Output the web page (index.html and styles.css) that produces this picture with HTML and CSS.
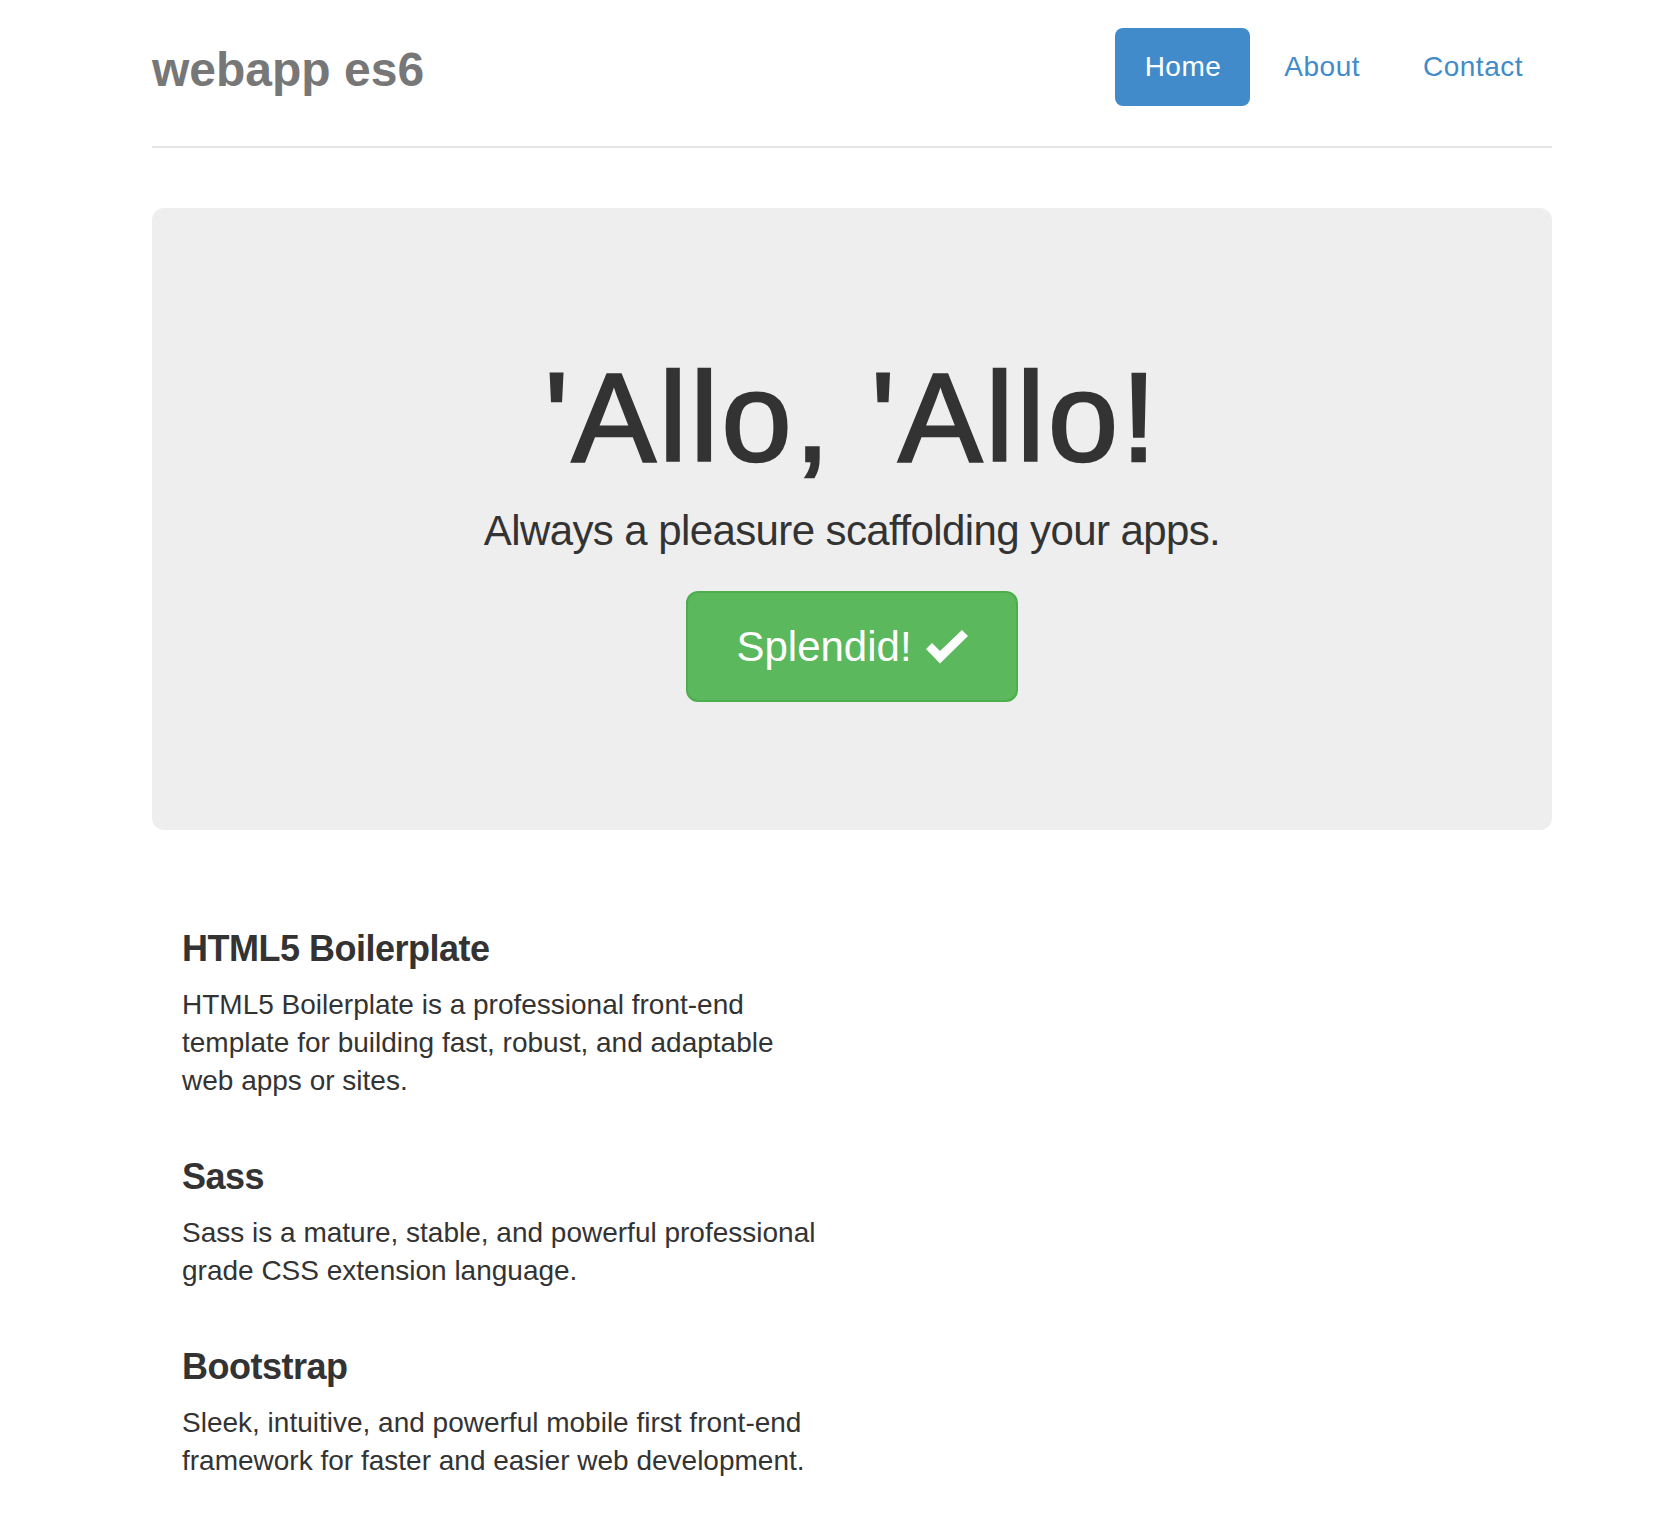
FILE: index.html
```html
<!DOCTYPE html>
<html lang="en">
<head>
<meta charset="utf-8">
<title>webapp es6</title>
<link rel="stylesheet" href="styles.css">
</head>
<body>
<div class="container">
  <header class="header">
    <h3 class="brand">webapp es6</h3>
    <nav>
      <ul class="nav-pills">
        <li class="active"><a href="#">Home</a></li>
        <li><a href="#">About</a></li>
        <li><a href="#">Contact</a></li>
      </ul>
    </nav>
  </header>

  <section class="jumbotron">
    <h1 class="hero-title">'Allo, 'Allo!</h1>
    <p class="lead">Always a pleasure scaffolding your apps.</p>
    <a class="btn-splendid" href="#">Splendid!<svg class="check" viewBox="0 0 42 34" width="42" height="34" aria-hidden="true"><path d="M0 19 L6 13 L14 21 L36 0 L42 6 L14 33.5 Z" fill="#fff"/></svg></a>
  </section>

  <section class="marketing">
    <div class="col">
      <h4>HTML5 Boilerplate</h4>
      <p>HTML5 Boilerplate is a professional front-end template for building fast, robust, and adaptable web apps or sites.</p>
      <h4>Sass</h4>
      <p>Sass is a mature, stable, and powerful professional grade CSS extension language.</p>
      <h4>Bootstrap</h4>
      <p>Sleek, intuitive, and powerful mobile first front-end framework for faster and easier web development.</p>
    </div>
  </section>
</div>
</body>
</html>
```

FILE: styles.css
```css
html, body {
  background: #fff;
}

body {
  margin: 0;
  font-family: "Liberation Sans", Arial, Helvetica, sans-serif;
  font-size: 28px;
  line-height: 38px;
  color: #333;
}

.container {
  width: 1400px;
  margin-left: 152px;
}

/* Header */
.header {
  display: flex;
  justify-content: space-between;
  align-items: flex-start;
  padding-top: 28px;
  padding-bottom: 40px;
  border-bottom: 2px solid #e5e5e5;
}

.brand {
  margin: 0;
  padding-top: 6px;
  font-size: 48px;
  line-height: 72px;
  font-weight: 700;
  color: #777;
}

.nav-pills {
  display: flex;
  gap: 4px;
  list-style: none;
  margin: 0;
  padding: 0;
}

.nav-pills a {
  display: block;
  padding: 20px 29px 20px 30px;
  font-size: 28px;
  line-height: 38px;
  letter-spacing: 0.5px;
  color: #428bca;
  text-decoration: none;
  border-radius: 8px;
}

.nav-pills .active a {
  background: #428bca;
  color: #fff;
}

/* Jumbotron */
.jumbotron {
  margin-top: 60px;
  padding: 145px 120px 128px;
  background: #eeeeee;
  border-radius: 12px;
  text-align: center;
  display: flex;
  flex-direction: column;
  align-items: center;
}

.hero-title {
  margin: 0;
  font-size: 126px;
  line-height: 130px;
  font-weight: 400;
  letter-spacing: 3.2px;
  -webkit-text-stroke: 2.5px #333;
  color: #333;
}

.lead {
  margin: 20px 0 0;
  font-size: 42px;
  line-height: 56px;
  letter-spacing: -0.6px;
  color: #333;
}

.btn-splendid {
  margin-top: 32px;
  display: inline-flex;
  align-items: center;
  gap: 14px;
  padding: 28px 48px;
  font-size: 42px;
  line-height: 51px;
  color: #fff;
  background: #5cb85c;
  border: 2px solid #4cae4c;
  border-radius: 12px;
  text-decoration: none;
}

.check {
  display: block;
}

/* Marketing */
.marketing {
  margin-top: 100px;
}

.col {
  width: 640px;
  padding-left: 30px;
}

.col h4 {
  margin: 0 0 18px;
  font-size: 36px;
  line-height: 38px;
  font-weight: 700;
  letter-spacing: -0.5px;
}

.col p {
  margin: 0;
}

.col p + h4 {
  margin-top: 58px;
}
```
